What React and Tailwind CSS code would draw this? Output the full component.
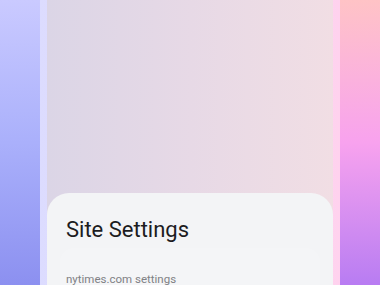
export default function App() {
  return (
    <div className="flex h-[285px] w-[380px] overflow-hidden" style={{ fontFamily: "Roboto, 'Noto Sans', sans-serif" }}>
      <div className="w-[40px] shrink-0 bg-gradient-to-b from-[#cacaff] via-[#aab0fb] to-[#8c90f0]"></div>
      <div className="flex w-[300px] shrink-0 bg-gradient-to-r from-[#dcdcff] to-[#ffd2ee] px-[7px]">
        <div className="flex h-full flex-1 flex-col bg-gradient-to-r from-[#dbd5e6] via-[#e7d9e6] to-[#f1dee4]">
          <div className="flex-1"></div>
          <div className="h-[92px] overflow-hidden rounded-t-[22px] bg-[#f3f4f6] pt-[22px]">
            <h1 className="px-[19px] text-[22px] leading-[30px] text-[#1c1c1e]">Site Settings</h1>
            <div className="mx-[13px] mt-[3px] h-[60px] rounded-t-[14px] bg-white/15 px-[6px] pt-[23px]">
              <p className="text-[11.5px] leading-[16px] text-[#808185]">nytimes.com settings</p>
            </div>
          </div>
        </div>
      </div>
      <div className="w-[40px] shrink-0 bg-gradient-to-b from-[#ffc3c6] via-[#f8a2ee] to-[#b87cf2]"></div>
    </div>
  );
}
